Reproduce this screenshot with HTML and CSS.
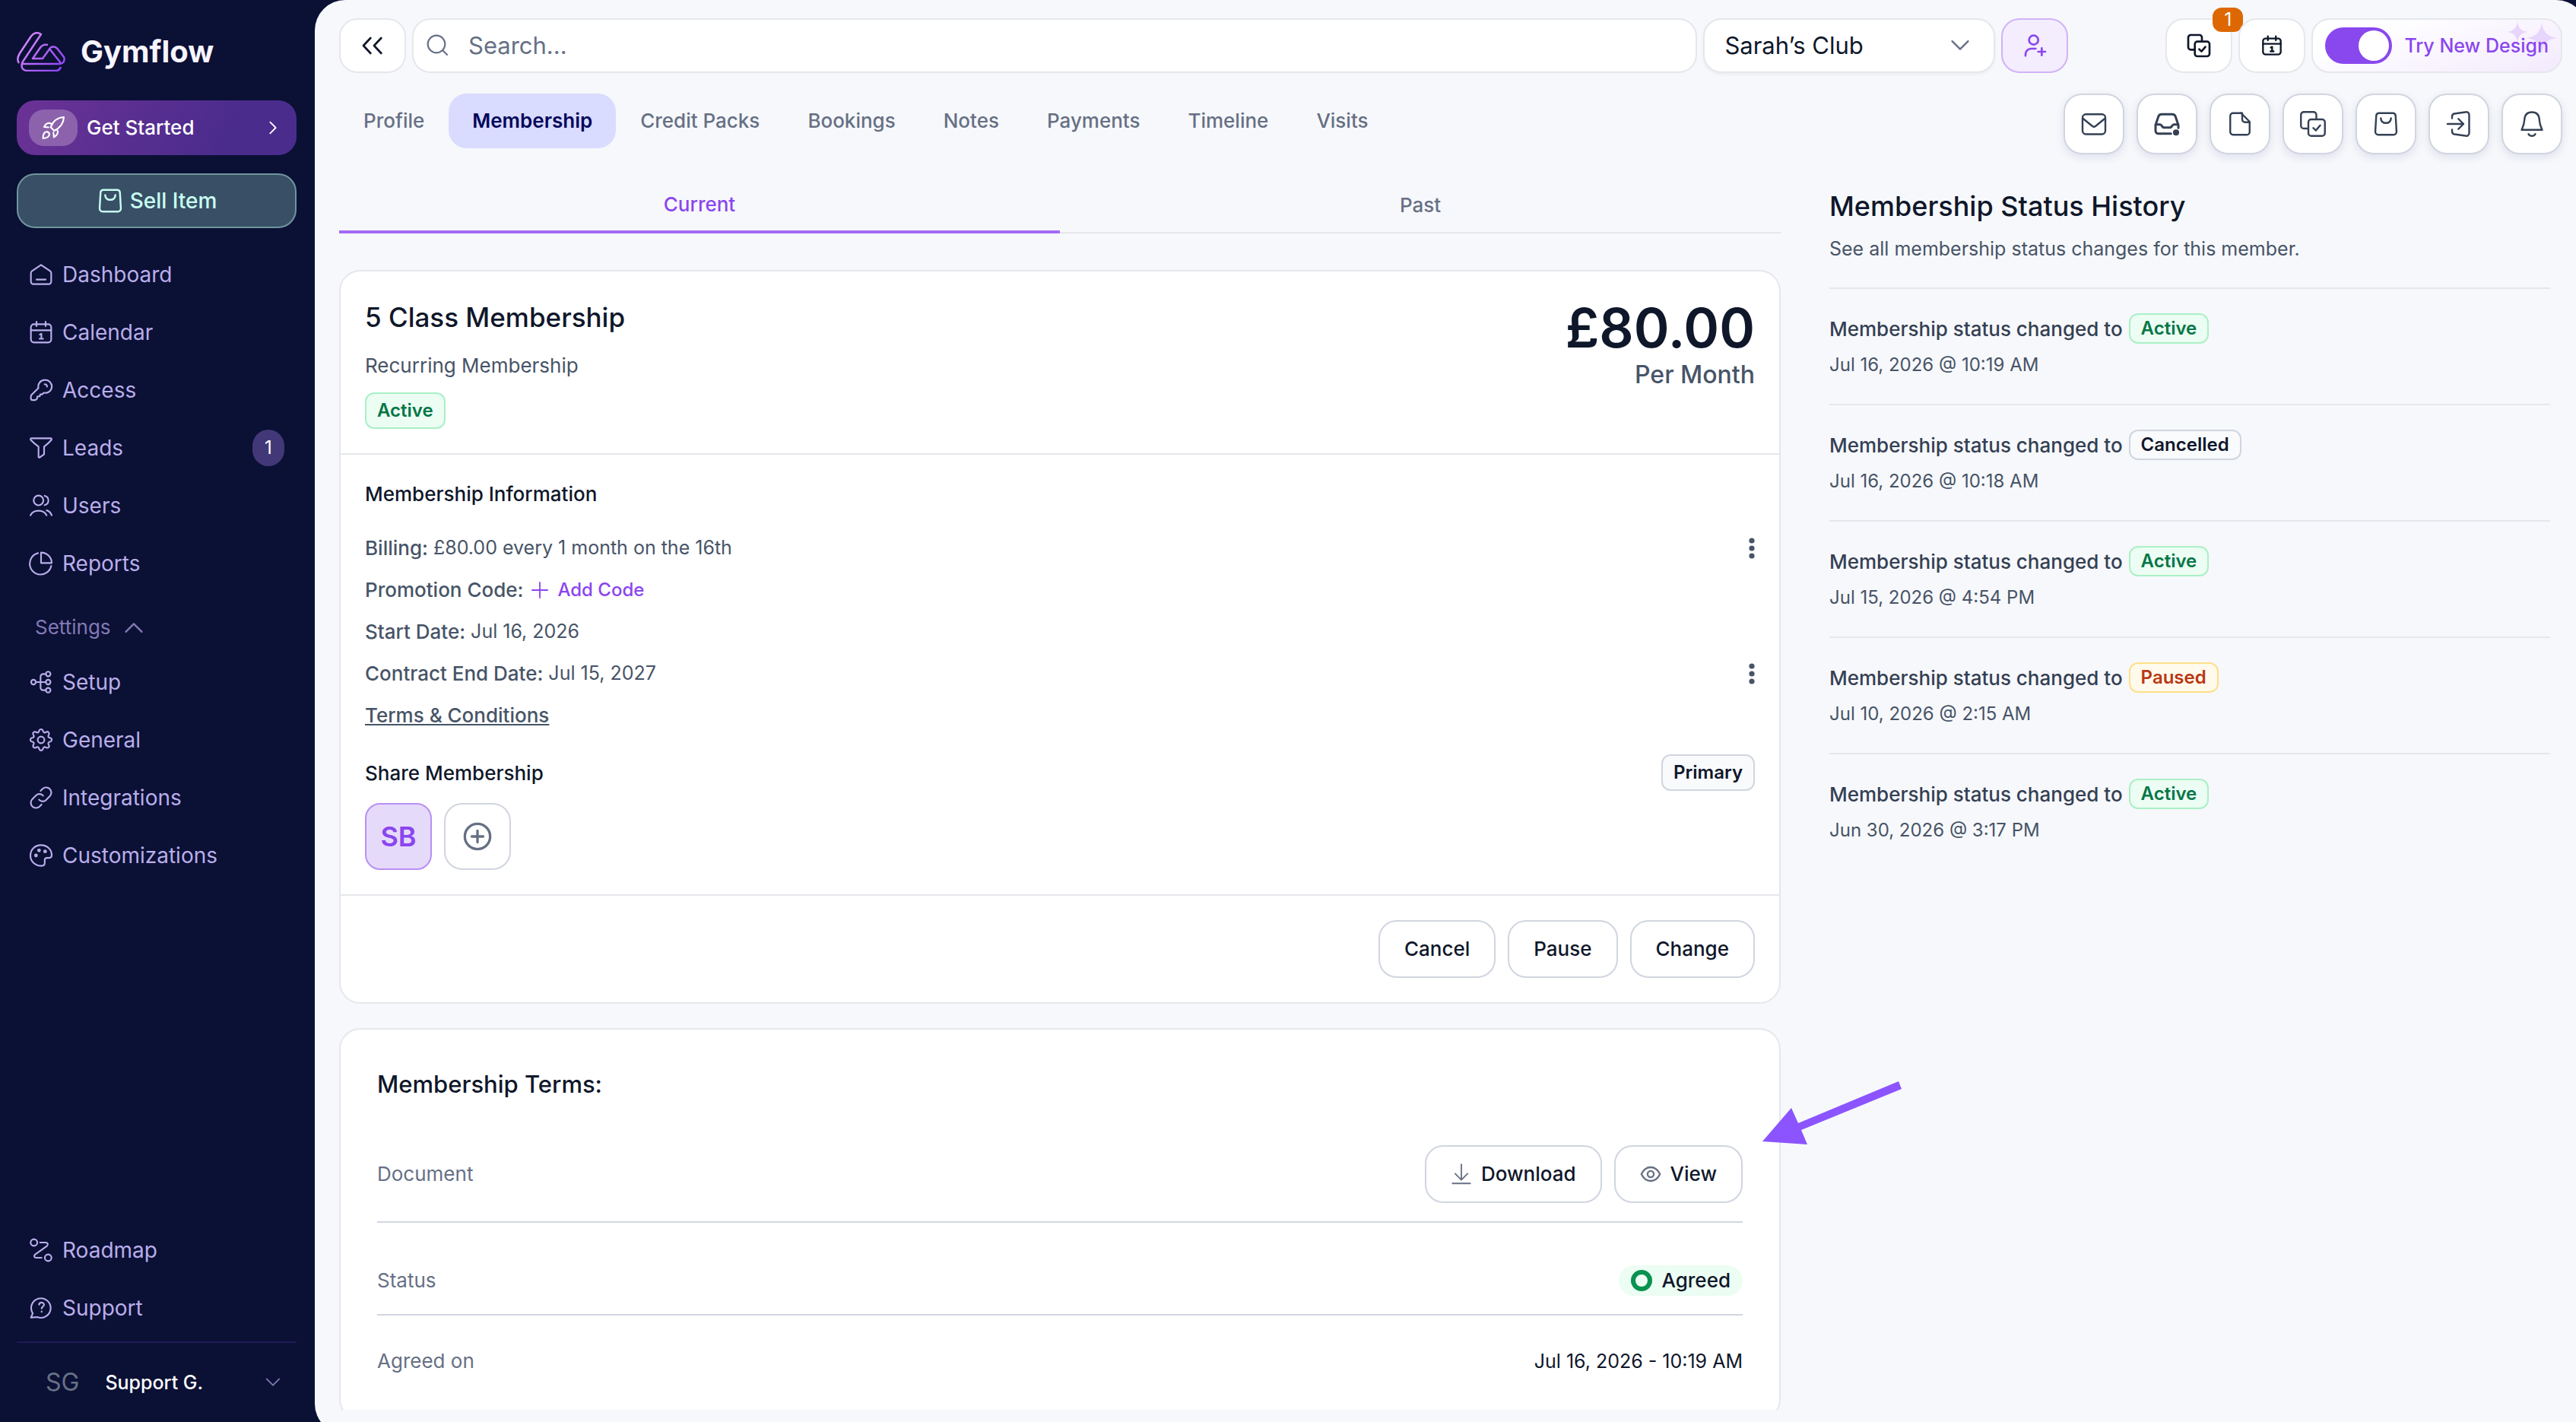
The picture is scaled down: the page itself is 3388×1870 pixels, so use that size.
FILE: index.html
```html
<!DOCTYPE html>
<html lang="en">
<head>
    <meta charset="UTF-8">
    <meta name="viewport" content="width=device-width, initial-scale=1.0">
    <title>Gymflow - Membership</title>
    <link rel="stylesheet" href="styles.css">
</head>
<body>
    <!-- Icon sprite -->
    <svg class="sprite" aria-hidden="true">
        <symbol id="i-bag" viewBox="0 0 24 24"><path d="M6 2.500h12a2.500 2.500 0 0 1 2.500 2.300l.8 13.800a2.700 2.700 0 0 1-2.700 2.900H5.400a2.700 2.700 0 0 1-2.700-2.900l.8-13.800A2.500 2.500 0 0 1 6 2.500z"/><path d="M7.500 7c.3 2.600 2 4.200 4.500 4.200s4.200-1.600 4.500-4.200"/></symbol>
        <symbol id="i-home" viewBox="0 0 24 24"><path d="M2 10.500a2.500 2.500 0 0 1 1.100-2L12 2.500l8.900 6a2.500 2.500 0 0 1 1.100 2V19a2.500 2.500 0 0 1-2.500 2.500h-15A2.500 2.500 0 0 1 2 19z"/><path d="M7.500 17h9"/></symbol>
        <symbol id="i-calendar" viewBox="0 0 24 24"><rect x="2" y="4" width="20" height="18" rx="3"/><path d="M2 10h20M7.500 1.500V6M16.500 1.500V6M10.800 14.200l1.500-.8v5M10.500 18.400h3.500"/></symbol>
        <symbol id="i-key" viewBox="0 0 24 24"><path d="M15.700 2a6.400 6.400 0 1 1-1 12.600L13 16.200h-1.800l-.5 2H8.500L8 20.500l-1.500 1.300H3.300A1.300 1.300 0 0 1 2 20.500v-2.300c0-.6.2-1.100.6-1.500L9.400 10A6.500 6.500 0 0 1 15.700 2z"/><path d="M15.500 6.200c1.500 0 2.400.9 2.400 2.400"/></symbol>
        <symbol id="i-funnel" viewBox="0 0 24 24"><path d="M2.500 2.500h19c.8 0 1.200 1 .7 1.600-1.700 2-4 4.300-7.200 6.600v7.600l-4.400 3.100c-.5.300-1.100 0-1.100-.6V10.700C6.300 8.400 3.600 6 1.800 4.100c-.5-.6-.1-1.600.7-1.600z"/></symbol>
        <symbol id="i-users" viewBox="0 0 24 24"><circle cx="9.500" cy="6.800" r="4.800"/><path d="M1.500 21.500c1.500-3 4.500-4.500 8-4.500s6.500 1.500 8 4.500M15.500 2.200a4.700 4.700 0 0 1 0 9.200M17.500 16.600c2.300.7 4 2.300 5 4.900"/></symbol>
        <symbol id="i-pie" viewBox="0 0 24 24"><path d="M9 1.800A10.700 10.700 0 1 0 22 14.500"/><path d="M12 1.200A10.500 10.500 0 0 1 22.500 11.500H12z"/></symbol>
        <symbol id="i-nodes" viewBox="0 0 24 24"><circle cx="4.500" cy="12" r="2.300"/><circle cx="19" cy="4" r="2.300"/><circle cx="19" cy="12" r="2.300"/><circle cx="19" cy="20" r="2.300"/><path d="M6.800 12h9.900M16.700 4H14a2.500 2.500 0 0 0-2.500 2.500v11A2.500 2.500 0 0 0 14 20h2.700"/></symbol>
        <symbol id="i-gear" viewBox="0 0 24 24"><circle cx="12" cy="12" r="3.300"/><path d="M10.300 2.600c.6-1.500 2.800-1.500 3.400 0l.5 1.300c.3.700 1.200 1.100 1.900.8l1.300-.6c1.400-.7 3 .9 2.400 2.400l-.6 1.300c-.3.700 0 1.600.8 1.900l1.400.5c1.500.6 1.500 2.800 0 3.400l-1.400.5c-.7.3-1.100 1.200-.8 1.900l.6 1.300c.7 1.400-.9 3-2.400 2.400l-1.300-.6c-.7-.3-1.600 0-1.900.8l-.5 1.400c-.6 1.500-2.800 1.500-3.400 0l-.5-1.400c-.3-.7-1.200-1.100-1.900-.8l-1.300.6c-1.400.7-3-.9-2.400-2.400l.6-1.300c.3-.7 0-1.600-.8-1.900l-1.400-.5c-1.500-.6-1.500-2.800 0-3.400L4 9.700c.7-.3 1.100-1.200.8-1.900l-.6-1.300c-.7-1.400.9-3 2.400-2.400l1.300.6c.7.300 1.600 0 1.900-.8z"/></symbol>
        <symbol id="i-link" viewBox="0 0 24 24"><path d="M10 14a4.800 4.800 0 0 0 6.800.4l4-4A5.100 5.100 0 0 0 13.600 3.200L11.500 5.300M14 10a4.800 4.800 0 0 0-6.800-.4l-4 4a5.100 5.100 0 0 0 7.200 7.200l2.100-2.100"/></symbol>
        <symbol id="i-palette" viewBox="0 0 24 24"><path d="M12 1.800c6 0 10.500 4.500 10.500 9.800 0 1.900-1 2.700-2.800 2.700h-1.600c-1.700 0-2.500.9-2.500 2.500v2.700c0 1.700-1.100 2.700-3 2.700C6 22.200 1.500 17.800 1.500 12S6 1.800 12 1.800z"/><circle cx="7" cy="12" r="1" fill="currentColor"/><circle cx="10" cy="7" r="1" fill="currentColor"/><circle cx="16" cy="8" r="1" fill="currentColor"/></symbol>
        <symbol id="i-route" viewBox="0 0 24 24"><circle cx="5" cy="4.500" r="3.300"/><circle cx="19" cy="19.500" r="3.300"/><path d="M11 4.500h5.500c2.300 0 2.800 2 1.300 3.400L6.200 16.200c-1.700 1.400-1 3.300 1.100 3.300H12.500"/></symbol>
        <symbol id="i-help" viewBox="0 0 24 24"><path d="M2 21.500l1.800-4.200A9.600 9.600 0 1 1 8.300 21z"/><path d="M10 8.800c.2-1.400 1.200-2.100 2.500-2.100s2.500.9 2.500 2.100c0 1.700-2.400 1.800-2.400 3.700M12.600 15.400v.5"/></symbol>
        <symbol id="i-up" viewBox="0 0 24 24"><path d="M3 17l9-9 9 9"/></symbol>
        <symbol id="i-down" viewBox="0 0 24 24"><path d="M3 7l9 9 9-9"/></symbol>
        <symbol id="i-right" viewBox="0 0 24 24"><path d="M8 4l8 8-8 8"/></symbol>
        <symbol id="i-rocket" viewBox="0 0 24 24"><path d="M9.500 11.500C11.500 6 15.500 2 22.500 1.500c-.3 6.500-4.500 11-9.500 13.500zM10.500 8.200C7.300 6.500 4.500 7.500 3 11.200l4.300.4M15.700 13.500c1.800 3 .6 5.800-3 7.800l-.5-4.500M2 22.500c-.2-4.300 1.300-6.800 4-6.500 1.200.2 2.200 1 2.200 2.400-.2 2.800-2.700 3.900-6.200 4.100z"/></symbol>
        <symbol id="i-collapse" viewBox="0 0 24 24"><path d="M10 4.500L3 12l7 7.500M20.500 4.500l-7 7.500 7 7.500"/></symbol>
        <symbol id="i-search" viewBox="0 0 24 24"><circle cx="10.500" cy="10.500" r="8.500"/><path d="M16.700 16.700L21 21"/></symbol>
        <symbol id="i-user-plus" viewBox="0 0 24 24"><circle cx="11" cy="6.500" r="4.500"/><path d="M3 22v-1.500A5.500 5.500 0 0 1 8.500 15H13M19 14.500v7M15.500 18h7"/></symbol>
        <symbol id="i-tasks" viewBox="0 0 24 24"><path d="M7 16H4a2.500 2.500 0 0 1-2.500-2.500V4A2.500 2.500 0 0 1 4 1.500h8.500A2.500 2.500 0 0 1 15 4v3"/><rect x="8" y="8" width="14.500" height="14.500" rx="2.500"/><path d="M12.300 15.500l2.300 2.200 3.800-4.500"/></symbol>
        <symbol id="i-mail" viewBox="0 0 24 24"><rect x="2" y="3.500" width="20" height="17.500" rx="3"/><path d="M2.700 7.500l8 6.500c.8.600 1.800.6 2.600 0l8-6.500"/></symbol>
        <symbol id="i-inbox" viewBox="0 0 24 24"><path d="M15.500 20.500H4.500A2.500 2.500 0 0 1 2 18v-5l2.500-7.500A3 3 0 0 1 7.400 3.500h9.200a3 3 0 0 1 2.900 2L22 13v2.500M2 12.500h4c1.600 0 1.500 2.700 3.500 2.700h5c2 0 1.900-2.700 3.500-2.700h4"/><circle cx="20" cy="19.500" r="2.700" fill="currentColor" stroke="none"/></symbol>
        <symbol id="i-file" viewBox="0 0 24 24"><path d="M6 2.500h7l7.500 7.500v9a2.500 2.500 0 0 1-2.500 2.500H6A2.500 2.500 0 0 1 3.500 19V5A2.500 2.500 0 0 1 6 2.500z"/><path d="M12.500 2.500h1.500V8a2.500 2.500 0 0 0 2.500 2.500h4"/></symbol>
        <symbol id="i-enter" viewBox="0 0 24 24"><path d="M6 7V5.500A2.500 2.500 0 0 1 8 3l9.500-1.300A2.500 2.500 0 0 1 21 4v16a2.500 2.500 0 0 1-3.500 2.300L8 21A2.500 2.500 0 0 1 6 18.500V17M2 12h14M11.500 7.500L16 12l-4.500 4.500"/></symbol>
        <symbol id="i-bell" viewBox="0 0 24 24"><path d="M12 1.700c4.300 0 6.300 2.800 6.500 6.500.2 4.200 1 5.800 2.500 9H3c1.500-3.200 2.300-4.800 2.500-9 .2-3.700 2.200-6.500 6.500-6.500zM9 20.800c.7 1.300 1.700 1.700 3 1.700s2.300-.4 3-1.700"/></symbol>
        <symbol id="i-dots" viewBox="0 0 24 24"><g fill="currentColor" stroke="none"><circle cx="12" cy="4.500" r="2.700"/><circle cx="12" cy="12" r="2.700"/><circle cx="12" cy="19.500" r="2.700"/></g></symbol>
        <symbol id="i-plus" viewBox="0 0 24 24"><path d="M12 1v22M1 12h22"/></symbol>
        <symbol id="i-plus-circle" viewBox="0 0 24 24"><circle cx="12" cy="12" r="10"/><path d="M12 7.500v9M7.500 12h9"/></symbol>
        <symbol id="i-download" viewBox="0 0 24 24"><path d="M12 1v17M5 11.500l7 7 7-7M2 22.500h20"/></symbol>
        <symbol id="i-eye" viewBox="0 0 24 24"><path d="M1.500 12C4 7 7.500 4.300 12 4.300S20 7 22.500 12C20 17 16.500 19.700 12 19.700S4 17 1.500 12z"/><circle cx="12" cy="12" r="3.500"/></symbol>
    </svg>

    <div class="app">
        <aside class="sidebar">
            <a href="#" class="logo">
                <svg class="logo-mark" viewBox="0 0 64 52" aria-hidden="true">
                    <defs>
                        <linearGradient id="logoGradient" x1="0" y1="0" x2="64" y2="52" gradientUnits="userSpaceOnUse">
                            <stop offset="0" stop-color="#e79bff"/>
                            <stop offset=".5" stop-color="#b266f5"/>
                            <stop offset="1" stop-color="#8340f0"/>
                        </linearGradient>
                    </defs>
                    <g fill="none" stroke="url(#logoGradient)" stroke-width="2.500" stroke-linejoin="round">
                        <path d="M3 41c-3-4-2-8 1-13L18 7c4-6 9-7 14-4L10 36c-5 6-5 14 3 15h38c4 0 6-2 7-5"/>
                        <path d="M7 42h49c5 0 8-4 6-9L55 24c-4-6-10-6-13 0l-8 11H21l9-13c3-5 6-6 11-5M43 22l15 19"/>
                    </g>
                </svg>
                <span>Gymflow</span>
            </a>
            <button class="get-started">
                <span class="rocket"><svg class="icon"><use href="#i-rocket"/></svg></span>
                Get Started
                <svg class="icon-xs push"><use href="#i-right"/></svg>
            </button>
            <button class="sell-item"><svg class="icon"><use href="#i-bag"/></svg>Sell Item</button>
            <nav class="nav">
                <a href="#"><svg class="icon"><use href="#i-home"/></svg>Dashboard</a>
                <a href="#"><svg class="icon"><use href="#i-calendar"/></svg>Calendar</a>
                <a href="#"><svg class="icon"><use href="#i-key"/></svg>Access</a>
                <a href="#"><svg class="icon"><use href="#i-funnel"/></svg>Leads<span class="count">1</span></a>
                <a href="#"><svg class="icon"><use href="#i-users"/></svg>Users</a>
                <a href="#"><svg class="icon"><use href="#i-pie"/></svg>Reports</a>
            </nav>
            <button class="nav-heading">Settings <svg class="icon-sm"><use href="#i-up"/></svg></button>
            <nav class="nav">
                <a href="#"><svg class="icon"><use href="#i-nodes"/></svg>Setup</a>
                <a href="#"><svg class="icon"><use href="#i-gear"/></svg>General</a>
                <a href="#"><svg class="icon"><use href="#i-link"/></svg>Integrations</a>
                <a href="#"><svg class="icon"><use href="#i-palette"/></svg>Customizations</a>
            </nav>
            <nav class="nav nav-bottom">
                <a href="#"><svg class="icon"><use href="#i-route"/></svg>Roadmap</a>
                <a href="#"><svg class="icon"><use href="#i-help"/></svg>Support</a>
            </nav>
            <button class="account">
                <span class="initials">SG</span>
                <span>Support G.</span>
                <svg class="icon-xs push"><use href="#i-down"/></svg>
            </button>
        </aside>

        <main class="panel">
            <header class="topbar">
                <button class="box" aria-label="Collapse menu"><svg class="icon thick"><use href="#i-collapse"/></svg></button>
                <label class="search">
                    <svg class="icon"><use href="#i-search"/></svg>
                    <input type="text" placeholder="Search..." aria-label="Search">
                </label>
                <div class="club">
                    <select aria-label="Club">
                        <option>Sarah’s Club</option>
                    </select>
                    <svg class="icon-sm"><use href="#i-down"/></svg>
                </div>
                <button class="box box-purple" aria-label="Add user"><svg class="icon thick"><use href="#i-user-plus"/></svg></button>
                <div class="topbar-right">
                    <button class="box" aria-label="Tasks"><svg class="icon thick"><use href="#i-tasks"/></svg><span class="alert">1</span></button>
                    <button class="box" aria-label="Calendar"><svg class="icon-sm thick"><use href="#i-calendar"/></svg></button>
                    <label class="new-design">
                        <svg class="sparkles" viewBox="0 0 70 46" aria-hidden="true"><path d="M15 2q1 13 14 14-13 1-14 14-1-13-14-14 13-1 14-14zM47 2q1 20 21 22-20 1-21 22-1-21-21-22 20-2 21-22z"/></svg>
                        <input type="checkbox" checked>
                        <span>Try New Design</span>
                    </label>
                </div>
            </header>

            <div class="subbar">
                <nav class="tabs">
                    <a href="#">Profile</a>
                    <a href="#" class="active">Membership</a>
                    <a href="#">Credit Packs</a>
                    <a href="#">Bookings</a>
                    <a href="#">Notes</a>
                    <a href="#">Payments</a>
                    <a href="#">Timeline</a>
                    <a href="#">Visits</a>
                </nav>
                <div class="actions">
                    <button aria-label="Email"><svg class="icon-lg"><use href="#i-mail"/></svg></button>
                    <button aria-label="Inbox"><svg class="icon-lg thick"><use href="#i-inbox"/></svg></button>
                    <button aria-label="Document"><svg class="icon-lg"><use href="#i-file"/></svg></button>
                    <button aria-label="Tasks"><svg class="icon-lg"><use href="#i-tasks"/></svg></button>
                    <button aria-label="Sell"><svg class="icon-lg"><use href="#i-bag"/></svg></button>
                    <button aria-label="Check in"><svg class="icon-lg"><use href="#i-enter"/></svg></button>
                    <button aria-label="Notifications"><svg class="icon-lg"><use href="#i-bell"/></svg></button>
                </div>
            </div>

            <div class="content">
                <section class="memberships">
                    <div class="subtabs">
                        <button class="current">Current</button>
                        <button>Past</button>
                    </div>

                    <article class="card">
                        <div class="card-header">
                            <div>
                                <h2>5 Class Membership</h2>
                                <p class="type">Recurring Membership</p>
                                <span class="badge green">Active</span>
                            </div>
                            <div class="price">
                                <strong>£80.00</strong>
                                <span>Per Month</span>
                            </div>
                        </div>
                        <div class="card-body">
                            <h3>Membership Information</h3>
                            <div class="info">
                                <p><b>Billing:</b> £80.00 every 1 month on the 16th <button class="more" aria-label="Billing options"><svg class="icon"><use href="#i-dots"/></svg></button></p>
                                <p><b>Promotion Code:</b> <button class="add-code"><svg class="icon-xs"><use href="#i-plus"/></svg>Add Code</button></p>
                                <p><b>Start Date:</b> Jul 16, 2026</p>
                                <p><b>Contract End Date:</b> Jul 15, 2027 <button class="more" aria-label="Contract options"><svg class="icon"><use href="#i-dots"/></svg></button></p>
                                <p><a href="#">Terms &amp; Conditions</a></p>
                            </div>
                            <div class="share">
                                <h3>Share Membership</h3>
                                <span class="badge">Primary</span>
                            </div>
                            <div class="members">
                                <button class="member">SB</button>
                                <button class="member-add" aria-label="Add member"><svg class="icon-lg thick"><use href="#i-plus-circle"/></svg></button>
                            </div>
                        </div>
                        <div class="card-footer">
                            <button class="btn">Cancel</button>
                            <button class="btn">Pause</button>
                            <button class="btn">Change</button>
                        </div>
                    </article>

                    <article class="card terms">
                        <h2>Membership Terms:</h2>
                        <div class="term-row">
                            <span>Document</span>
                            <div class="term-buttons">
                                <button class="btn"><svg class="icon-md"><use href="#i-download"/></svg>Download</button>
                                <button class="btn"><svg class="icon-md thick"><use href="#i-eye"/></svg>View</button>
                            </div>
                        </div>
                        <div class="term-row">
                            <span>Status</span>
                            <span class="agreed"><i></i>Agreed</span>
                        </div>
                        <div class="term-row">
                            <span>Agreed on</span>
                            <span class="date">Jul 16, 2026 - 10:19 AM</span>
                        </div>
                        <svg class="pointer" viewBox="0 0 184 84" aria-hidden="true"><path d="M0 79l38-44 9 20 132-55 4 10-132 54 8 19z"/></svg>
                    </article>
                </section>

                <aside class="history">
                    <h2>Membership Status History</h2>
                    <p>See all membership status changes for this member.</p>
                    <ul>
                        <li>
                            <div>Membership status changed to <span class="badge green">Active</span></div>
                            <time>Jul 16, 2026 @ 10:19 AM</time>
                        </li>
                        <li>
                            <div>Membership status changed to <span class="badge">Cancelled</span></div>
                            <time>Jul 16, 2026 @ 10:18 AM</time>
                        </li>
                        <li>
                            <div>Membership status changed to <span class="badge green">Active</span></div>
                            <time>Jul 15, 2026 @ 4:54 PM</time>
                        </li>
                        <li>
                            <div>Membership status changed to <span class="badge orange">Paused</span></div>
                            <time>Jul 10, 2026 @ 2:15 AM</time>
                        </li>
                        <li>
                            <div>Membership status changed to <span class="badge green">Active</span></div>
                            <time>Jun 30, 2026 @ 3:17 PM</time>
                        </li>
                    </ul>
                </aside>
            </div>
        </main>
    </div>
</body>
</html>
```
FILE: styles.css
```css
* {
    box-sizing: border-box;
}

body {
    margin: 0;
    overflow: hidden;
    background: #0b1035;
    color: #0f172a;
    font-family: Inter, "Liberation Sans", sans-serif;
    font-size: 26px;
    line-height: 40px;
}

h2, h3, p, ul {
    margin: 0;
    padding: 0;
    font-weight: 500;
}

button, input, select {
    font: inherit;
    color: inherit;
}

button {
    cursor: pointer;
    padding: 0;
    border: none;
    background: none;
}

a {
    color: inherit;
    text-decoration: none;
}

.sprite {
    display: none;
}

.icon, .icon-xs, .icon-sm, .icon-md, .icon-lg {
    flex: none;
    width: 32px;
    height: 32px;
    fill: none;
    stroke: currentColor;
    stroke-width: 1.6;
    stroke-linecap: round;
    stroke-linejoin: round;
}

.icon-xs {
    width: 22px;
    height: 22px;
    stroke-width: 2;
}

.icon-sm, .icon-md {
    width: 28px;
    height: 28px;
}

.icon-lg {
    width: 36px;
    height: 36px;
}

.thick {
    stroke-width: 2;
}

.push {
    margin-left: auto;
}

/* Sidebar */
.app {
    display: flex;
    height: 100vh;
}

.sidebar {
    display: flex;
    flex-direction: column;
    flex: none;
    width: 414px;
    padding: 40px 24px 0 22px;
    color: #b9aeea;
    font-size: 28px;
}

.logo {
    display: flex;
    align-items: center;
    gap: 20px;
    margin-bottom: 40px;
    color: #f7f5ff;
    font-size: 40px;
    font-weight: 700;
    line-height: 56px;
}

.logo-mark {
    width: 64px;
    height: 52px;
}

.get-started, .sell-item {
    display: flex;
    align-items: center;
    gap: 12px;
    height: 72px;
    border-radius: 24px;
    font-size: 26px;
    font-weight: 500;
}

.logo + .get-started {
    margin-top: -4px;
}

.get-started {
    padding: 0 20px 0 16px;
    background: linear-gradient(120deg, #6c3296, #4a2c8d 75%);
    color: #fff;
}

.rocket {
    display: flex;
    align-items: center;
    justify-content: center;
    width: 64px;
    height: 48px;
    border-radius: 20px;
    background: #8c62ad;
}

.sell-item {
    justify-content: center;
    gap: 8px;
    margin: 24px 0 31px;
    border: 2px solid #6e969d;
    background: #394f66;
    color: #c8fff1;
    font-size: 28px;
}

.sell-item svg {
    width: 36px;
    height: 36px;
}

.nav {
    display: flex;
    flex-direction: column;
    gap: 16px;
}

.nav a {
    display: flex;
    align-items: center;
    gap: 12px;
    height: 60px;
    padding: 0 16px;
}

.nav .count {
    width: 42px;
    margin-left: auto;
    border-radius: 24px;
    background: #423877;
    color: #fff;
    font-size: 24px;
    line-height: 48px;
    text-align: center;
}

.nav-heading {
    display: flex;
    align-items: center;
    gap: 16px;
    margin: 32px 24px 20px;
    color: #8379b4;
    font-size: 26px;
    line-height: 44px;
}

.nav-heading svg {
    stroke-width: 2;
}

.nav-bottom {
    margin-top: auto;
    padding-bottom: 14px;
    border-bottom: 2px solid #1e1a55;
}

.account {
    display: flex;
    align-items: center;
    gap: 34px;
    flex: none;
    height: 104px;
    padding: 0 20px 0 38px;
    color: #fff;
    font-size: 25px;
    font-weight: 500;
}

.account .push {
    color: #8379b4;
}

.initials {
    color: #667085;
    font-size: 32px;
    font-weight: 400;
}

/* Main panel, runs a little past the right and bottom window edges */
.panel {
    display: flex;
    flex-direction: column;
    flex: 1;
    min-width: 0;
    height: calc(100vh + 16px);
    margin-right: -14px;
    padding: 24px 32px 32px;
    border-radius: 40px;
    background: #f7f8fb;
}

.topbar, .topbar-right {
    display: flex;
    gap: 8px;
}

.topbar-right {
    margin-left: 120px;
}

.box, .search, .club select, .new-design {
    height: 72px;
    border: 2px solid #e5e7ec;
    border-radius: 24px;
    background: #fff;
}

.box {
    display: flex;
    align-items: center;
    justify-content: center;
    position: relative;
    flex: none;
    width: 88px;
    color: #0f172a;
}

.box-purple {
    border-color: #d0b3f8;
    background: #f3edfd;
    color: #8a46ee;
}

.alert {
    position: absolute;
    top: -16px;
    right: -16px;
    width: 40px;
    border-radius: 12px;
    background: #dd6803;
    color: #fff;
    font-size: 24px;
    line-height: 32px;
}

.search {
    display: flex;
    align-items: center;
    flex: 1;
    gap: 22px;
    padding: 0 16px;
    color: #667085;
    font-size: 31px;
}

.search input {
    flex: 1;
    border: none;
    outline: none;
    background: none;
}

.search input::placeholder {
    color: #667085;
    opacity: 1;
}

.club {
    position: relative;
    width: 384px;
}

.club select {
    width: 100%;
    padding: 0 26px;
    appearance: none;
    box-shadow: 0 2px 4px rgba(16, 24, 40, 0.05);
    font-size: 31px;
}

.club svg {
    position: absolute;
    top: 22px;
    right: 32px;
    color: #667085;
    stroke-width: 2;
}

.new-design {
    display: flex;
    align-items: center;
    gap: 16px;
    position: relative;
    padding: 0 16px;
    background: linear-gradient(160deg, #fff 20%, #f3eafd);
    color: #8a46ee;
    font-size: 25px;
    font-weight: 500;
}

.new-design input {
    appearance: none;
    width: 88px;
    height: 48px;
    margin: 0;
    padding: 4px;
    border-radius: 24px;
    background: #8848ee;
}

.new-design input::before {
    content: "";
    display: block;
    width: 40px;
    height: 40px;
    border-radius: 50%;
    background: #fff;
}

.new-design input:checked::before {
    margin-left: auto;
}

.new-design span {
    position: relative;
}

.sparkles {
    position: absolute;
    top: 0;
    right: 2px;
    width: 70px;
    height: 46px;
    fill: #e8d5fb;
}

.subbar {
    display: flex;
    justify-content: space-between;
    margin-top: 27px;
}

.tabs {
    display: flex;
    gap: 1px;
    color: #667085;
    font-weight: 500;
}

.tabs a {
    height: 72px;
    padding: 0 31px;
    border-radius: 24px;
    line-height: 72px;
}

.tabs a:first-child {
    padding-left: 32px;
}

.tabs .active {
    background: #d9dbff;
    color: #04075a;
    font-weight: 600;
}

.actions {
    display: flex;
    gap: 16px;
}

.actions button {
    display: flex;
    align-items: center;
    justify-content: center;
    width: 80px;
    height: 80px;
    border: 2px solid #d0d5df;
    border-radius: 24px;
    background: #fff;
    box-shadow: 0 4px 12px rgba(60, 50, 140, 0.12);
    color: #344054;
}

.content {
    display: grid;
    grid-template-columns: 2fr 1fr;
    gap: 64px;
    flex: 1;
    min-height: 0;
    padding-right: 16px;
    overflow: hidden;
}

/* Memberships */
.subtabs {
    display: grid;
    grid-template-columns: 1fr 1fr;
    margin: 32px 0 48px;
    color: #667085;
    font-weight: 500;
}

.subtabs button {
    height: 72px;
    border-bottom: 2px solid #e5e7ec;
}

.subtabs .current {
    border-bottom: 4px solid #a36bf4;
    color: #8a46ee;
}

.card {
    margin-bottom: 32px;
    border: 2px solid #e5e7ec;
    border-radius: 28px;
    background: #fff;
}

.card-header {
    display: flex;
    justify-content: space-between;
    padding: 32px;
    border-bottom: 2px solid #e5e7ec;
}

.card-header h2 {
    font-size: 35px;
    line-height: 56px;
}

.type {
    margin: 16px 0 15px;
    color: #475467;
    font-weight: 400;
}

.badge {
    display: inline-block;
    padding: 0 14px;
    border: 2px solid #d0d5df;
    border-radius: 12px;
    background: #f9fafc;
    color: #0f172a;
    font-size: 24px;
    font-weight: 600;
    line-height: 44px;
}

.card-header .badge {
    display: block;
    width: fit-content;
}

.badge.green {
    border-color: #aaf0c6;
    background: #ecfdf3;
    color: #067647;
}

.badge.orange {
    border-color: #fedf89;
    background: #fffaeb;
    color: #b93815;
}

.price {
    display: flex;
    flex-direction: column;
    align-items: flex-end;
    color: #475467;
    font-size: 32px;
    font-weight: 500;
}

.price strong {
    color: #0f172a;
    font-size: 71px;
    font-weight: 600;
    line-height: 84px;
}

.card-body {
    padding: 32px;
    border-bottom: 2px solid #e5e7ec;
}

.card-body h3 {
    font-size: 26px;
    line-height: 39px;
}

.info {
    display: flex;
    flex-direction: column;
    gap: 16px;
    margin: 32px 0;
    color: #475467;
}

.info p {
    display: flex;
    gap: 7px;
    font-size: 25px;
    font-weight: 400;
    line-height: 39px;
}

.info b {
    font-size: 26px;
    font-weight: 500;
}

.info a {
    font-size: 26px;
    font-weight: 500;
    text-decoration: underline;
}

.more {
    display: flex;
    align-items: center;
    justify-content: center;
    width: 8px;
    margin-left: auto;
}

.add-code {
    display: flex;
    align-items: center;
    gap: 12px;
    margin-left: 4px;
    color: #8a46ee;
    font-size: 24px;
    font-weight: 500;
}

.share {
    display: flex;
    align-items: center;
    justify-content: space-between;
}

.members {
    display: flex;
    gap: 16px;
    margin-top: 16px;
}

.member, .member-add {
    display: flex;
    align-items: center;
    justify-content: center;
    width: 88px;
    height: 88px;
    border: 2px solid #d0d5df;
    border-radius: 24px;
    color: #667085;
}

.member {
    border-color: #b88ff5;
    border-radius: 20px;
    background: #e6dafb;
    color: #8a46ee;
    font-size: 36px;
    font-weight: 600;
}

.member-add svg {
    width: 40px;
    height: 40px;
}

.card-footer {
    display: flex;
    justify-content: flex-end;
    gap: 16px;
    padding: 32px;
}

.btn {
    display: flex;
    align-items: center;
    gap: 12px;
    height: 76px;
    padding: 0 32px;
    border: 2px solid #d0d5df;
    border-radius: 24px;
    background: #fff;
    font-weight: 500;
}

.btn svg {
    color: #667085;
}

/* Membership terms */
.terms {
    position: relative;
    padding: 48px 48px 16px;
}

.terms h2 {
    font-size: 31px;
    line-height: 48px;
}

.term-row {
    display: flex;
    align-items: center;
    justify-content: space-between;
    padding: 56px 0 24px;
    border-bottom: 2px solid #d0d5df;
    color: #667085;
}

.term-row:nth-child(4) {
    padding: 40px 0;
    border-bottom: none;
}

.term-buttons {
    display: flex;
    gap: 16px;
}

.term-buttons .btn {
    color: #0f172a;
}

.agreed {
    display: flex;
    align-items: center;
    gap: 12px;
    padding: 0 16px;
    border-radius: 20px;
    background: #ecfdf3;
    color: #0f172a;
    font-weight: 500;
}

.agreed i {
    width: 28px;
    height: 28px;
    border: 6px solid #099250;
    border-radius: 50%;
}

.date {
    color: #0f172a;
    font-size: 25px;
}

.pointer {
    position: absolute;
    top: 68px;
    right: -162px;
    width: 184px;
    height: 84px;
    fill: #8b54ff;
}

/* Status history */
.history {
    padding-top: 44px;
    color: #475467;
}

.history h2 {
    color: #0f172a;
    font-size: 36px;
    line-height: 48px;
}

.history p {
    margin: 12px 0 31px;
    font-size: 25px;
    font-weight: 400;
}

.history ul {
    list-style: none;
}

.history li {
    padding: 32px 0;
    border-top: 2px solid #e5e7ec;
    font-weight: 400;
    line-height: 39px;
}

.history li div {
    display: flex;
    align-items: center;
    gap: 8px;
    margin-bottom: 8px;
    color: #344054;
    font-weight: 500;
}

.history time {
    display: block;
    font-size: 24px;
}

.history .badge {
    line-height: 36px;
}
```
